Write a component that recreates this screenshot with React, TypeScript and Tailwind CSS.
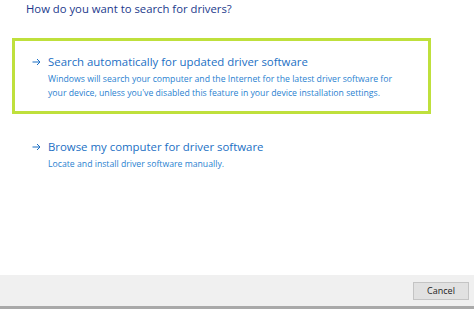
function Arrow() {
  return (
    <svg width="9" height="8" viewBox="0 0 9 8" className="shrink-0">
      <path d="M0.5 4H8M5 1l3 3-3 3" fill="none" stroke="currentColor" strokeWidth="1" />
    </svg>
  );
}

export default function App() {
  return (
    <div className="flex h-[309px] w-[474px] flex-col bg-white" style={{ fontFamily: '"Open Sans", "Noto Sans", sans-serif' }}>
      {/* Title */}
      <div className="px-[26px] pt-[1px]">
        <h1 className="text-[11.3px] leading-[16px] text-[#22398c]">How do you want to search for drivers?</h1>
      </div>

      {/* Options */}
      <div className="mt-[21px] px-[12px]">
        <div className="h-[76px] w-[419px] border-[3px] border-[#bfe03c] pl-[17px] pt-[12px]">
          <div className="flex items-center gap-[7px] text-[#1b6fc4]">
            <Arrow />
            <span className="text-[11.4px] leading-[18px]">Search automatically for updated driver software</span>
          </div>
          <p className="ml-[16px] mt-[1px] text-[8.7px] leading-[14px] text-[#2a7fd0]">
            Windows will search your computer and the Internet for the latest driver software for
            <br />
            your device, unless you've disabled this feature in your device installation settings.
          </p>
        </div>

        <div className="mt-[24px] pl-[20px]">
          <div className="flex items-center gap-[7px] text-[#1b6fc4]">
            <Arrow />
            <span className="text-[11.4px] leading-[18px]">Browse my computer for driver software</span>
          </div>
          <p className="ml-[16px] mt-[1px] text-[8.7px] leading-[14px] text-[#2a7fd0]">Locate and install driver software manually.</p>
        </div>
      </div>

      <div className="flex-1" />

      {/* Footer */}
      <div className="flex h-[31px] items-start justify-end bg-[#f0f0f0] pr-[5px] pt-[7px]">
        <button className="h-[18px] w-[56px] border border-[#c4c4c4] bg-[#e1e1e1] text-[9px] leading-[16px] text-[#222]">
          Cancel
        </button>
      </div>
      <div className="h-[3px] bg-[#a9a9a9]" />
    </div>
  );
}
